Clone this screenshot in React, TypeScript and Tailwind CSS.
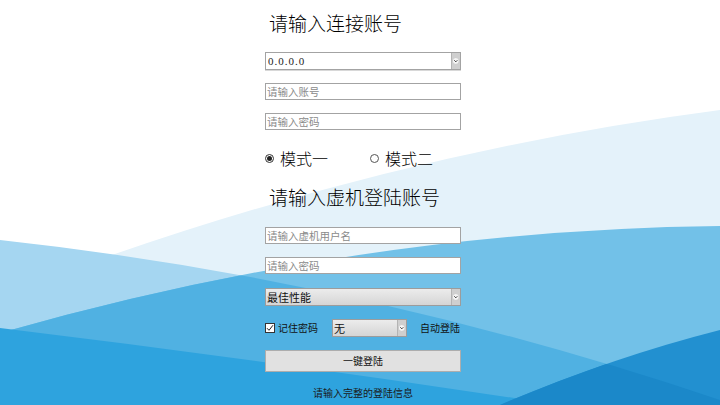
import React from 'react';

const WAVE_A = 'M0,296 Q360,157 720,110 L720,405 L0,405 Z';
const WAVE_B = 'M0,240 Q360,279 720,400 L720,405 L0,405 Z';
const WAVE_C = 'M0,333 Q360,230 720,226 L720,405 L0,405 Z';
const WAVE_D = 'M0,328 Q280,362 560,405 L0,405 Z';
const WAVE_E = 'M500,405 Q610,358 720,330 L720,405 Z';

function Waves() {
  return (
    <svg className="absolute inset-0" width="720" height="405" viewBox="0 0 720 405">
      <defs>
        <clipPath id="clipB">
          <path d={WAVE_B} />
        </clipPath>
      </defs>
      <path d={WAVE_A} fill="#e4f2fa" />
      <path d={WAVE_B} fill="#a5d6f1" />
      <path d={WAVE_C} fill="#72c1e8" />
      <path d={WAVE_C} fill="#50b1e2" clipPath="url(#clipB)" />
      <path d={WAVE_D} fill="#2ea3de" />
      <path d={WAVE_E} fill="#2290d0" />
      <path d={WAVE_E} fill="#1b88c9" clipPath="url(#clipB)" />
    </svg>
  );
}

function DropArrow() {
  return (
    <svg width="9" height="16" viewBox="0 0 9 16" className="shrink-0">
      <rect x="0" y="0" width="9" height="16" fill="#cfcfcf" />
      <line x1="0.5" y1="0" x2="0.5" y2="16" stroke="#b4b4b4" />
      <circle cx="4.8" cy="8" r="3.4" fill="#f6f6f6" stroke="#b8b8b8" strokeWidth="0.6" />
      <path d="M3.3 7.3 L4.8 8.8 L6.3 7.3" fill="none" stroke="#333" strokeWidth="1" />
    </svg>
  );
}

function TextBox({ placeholder, className = '' }: { placeholder: string; className?: string }) {
  return (
    <input
      readOnly
      placeholder={placeholder}
      className={`h-[17px] w-full border border-[#a3a3a3] bg-white pl-px text-[10.5px] leading-[15px] outline-none placeholder:text-[#8a8a8a] ${className}`}
    />
  );
}

export default function App() {
  return (
    <div className="relative h-[405px] w-[720px] overflow-hidden bg-white font-['Noto_Sans_CJK_SC',sans-serif] text-[#111]">
      <Waves />

      <div className="relative ml-[265px] flex w-[196px] flex-col">
        <h1 className="mt-[10px] h-[26px] pl-[4px] text-[19px] leading-[26px] font-light text-black">
          请输入连接账号
        </h1>

        <div className="mt-[16px] flex h-[18px] items-center border border-[#a3a3a3] bg-white shadow-[0_1px_0_#d8d8d8]">
          <span className="flex-1 pl-[2px] font-['Liberation_Serif',serif] text-[11px] leading-[16px] tracking-[1px] text-[#222]">
            0.0.0.0
          </span>
          <DropArrow />
        </div>

        <TextBox placeholder="请输入账号" className="mt-[13px]" />
        <TextBox placeholder="请输入密码" className="mt-[13px]" />

        <div className="mt-[18px] flex h-[20px] items-center">
          <div className="flex w-[105px] items-center">
            <span className="flex h-[9px] w-[9px] items-center justify-center rounded-full border border-[#333] bg-white">
              <span className="h-[5px] w-[5px] rounded-full bg-[#222]" />
            </span>
            <span className="ml-[6px] text-[16px] leading-[20px] font-light text-black">模式一</span>
          </div>
          <div className="flex items-center">
            <span className="h-[9px] w-[9px] rounded-full border border-[#555] bg-white" />
            <span className="ml-[6px] text-[16px] leading-[20px] font-light text-black">模式二</span>
          </div>
        </div>

        <h2 className="mt-[16px] h-[26px] pl-[4px] text-[19px] leading-[26px] font-light text-black">
          请输入虚机登陆账号
        </h2>

        <TextBox placeholder="请输入虚机用户名" className="mt-[17px]" />
        <TextBox placeholder="请输入密码" className="mt-[13px]" />

        <div className="mt-[14px] flex h-[18px] items-center border border-[#9c9c9c] bg-gradient-to-b from-[#ececec] to-[#d5d5d5]">
          <span className="flex-1 pl-[1px] text-[11px] leading-[16px] text-[#111]">最佳性能</span>
          <DropArrow />
        </div>

        <div className="mt-[13px] flex h-[18px] items-center">
          <span className="flex h-[10px] w-[10px] items-center justify-center border border-[#333] bg-white">
            <svg width="8" height="8" viewBox="0 0 8 8">
              <path d="M1 4.2 L3 6.3 L7 1.2" fill="none" stroke="#222" strokeWidth="1" />
            </svg>
          </span>
          <span className="ml-[3px] w-[54px] text-[10px] leading-[18px] text-[#111]">记住密码</span>
          <div className="flex h-[18px] w-[75px] items-center border border-[#9c9c9c] bg-gradient-to-b from-[#ececec] to-[#d5d5d5]">
            <span className="flex-1 pl-[1px] text-[11px] leading-[16px] text-[#111]">无</span>
            <DropArrow />
          </div>
          <span className="ml-[13px] text-[10px] leading-[18px] text-[#111]">自动登陆</span>
        </div>

        <button className="mt-[13px] h-[22px] w-full border border-[#adadad] bg-[#e1e1e1] text-[10px] leading-[20px] text-[#111]">
          一键登陆
        </button>

        <p className="mt-[14px] h-[14px] text-center text-[10px] leading-[14px] text-[#1a1a1a]">
          请输入完整的登陆信息
        </p>
      </div>
    </div>
  );
}
